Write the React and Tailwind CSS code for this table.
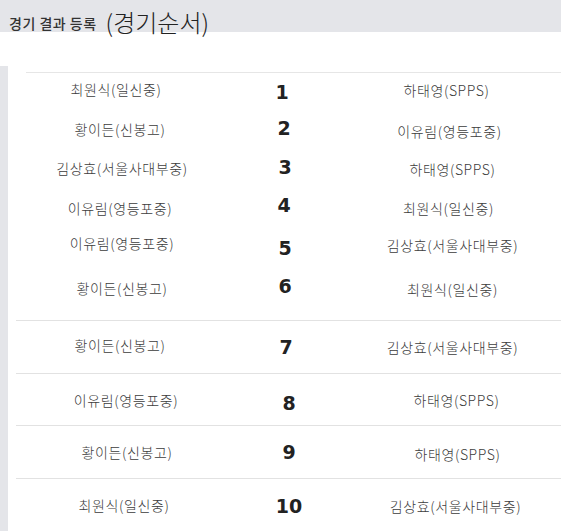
const rows = [
  { l: "최원식(일신중)", n: "1", r: "하태영(SPPS)", h: "h-[36px]", ml: "mt-[6px] -translate-x-[4px]", mn: "mt-[7px] -translate-x-[2px]", mr: "mt-[7px] -translate-x-[6px]" },
  { l: "황이든(신봉고)", n: "2", r: "이유림(영등포중)", h: "h-[39px]", ml: "mt-[10px]", mn: "mt-[7px]", mr: "mt-[12px] -translate-x-[3px]" },
  { l: "김상효(서울사대부중)", n: "3", r: "하태영(SPPS)", h: "h-[39px]", ml: "mt-[10px] translate-x-[2px]", mn: "mt-[7px] translate-x-[1px]", mr: "mt-[11px]" },
  { l: "이유림(영등포중)", n: "4", r: "최원식(일신중)", h: "h-[40px]", ml: "mt-[12px]", mn: "mt-[7px]", mr: "mt-[12px] -translate-x-[4px]" },
  { l: "이유림(영등포중)", n: "5", r: "김상효(서울사대부중)", h: "h-[40px]", ml: "mt-[7px] translate-x-[2px]", mn: "mt-[10px] translate-x-[1px]", mr: "mt-[9px]" },
  { l: "황이든(신봉고)", n: "6", r: "최원식(일신중)", h: "h-[54px]", ml: "mt-[12px] translate-x-[2px]", mn: "mt-[8px] translate-x-[1px]", mr: "mt-[13px]" },
  { l: "황이든(신봉고)", n: "7", r: "김상효(서울사대부중)", h: "h-[53px] border-t", ml: "mt-[14px]", mn: "mt-[14px] translate-x-[2px]", mr: "mt-[16px]" },
  { l: "이유림(영등포중)", n: "8", r: "하태영(SPPS)", h: "h-[53px] border-t", ml: "mt-[16px] translate-x-[6px]", mn: "mt-[17px] translate-x-[5px]", mr: "mt-[16px] translate-x-[4px]" },
  { l: "황이든(신봉고)", n: "9", r: "하태영(SPPS)", h: "h-[53px] border-t", ml: "mt-[16px] translate-x-[7px]", mn: "mt-[14px] translate-x-[5px]", mr: "mt-[18px] translate-x-[5px]" },
  { l: "최원식(일신중)", n: "10", r: "김상효(서울사대부중)", h: "h-[53px] border-t", ml: "mt-[16px] translate-x-[4px]", mn: "mt-[15px] translate-x-[5px]", mr: "mt-[17px] translate-x-[3px]" },
];

export default function App() {
  return (
    <div
      className="w-[561px] h-[531px] overflow-hidden bg-white text-[#333]"
      style={{ fontFamily: '"Noto Sans CJK KR", "Noto Sans", sans-serif' }}
    >
      {/* header */}
      <div className="h-8 bg-[#e4e5e9]">
        <div className="flex items-center pl-[9px] pt-[8px]">
          <span className="text-[14px] leading-[20px] font-medium tracking-[0.5px] text-[#333] translate-y-[1px]">
            경기 결과 등록
          </span>
          <span className="ml-[9px] text-[24px] leading-[28px] font-light text-[#222]">(경기순서)</span>
        </div>
      </div>

      {/* body */}
      <div className="flex mt-[34px] h-[465px]">
        <div className="w-2 bg-[#e4e5e9]" />
        <div className="flex-1 pl-2 flex flex-col">
          <div className="h-[6px] bg-white" />
          <div className="ml-[10px] border-t border-[#e6e6e6]" />
          {rows.map((row, i) => (
            <div
              key={i}
              className={`grid grid-cols-[208px_120px_1fr] border-[#e2e2e2] ${row.h}`}
            >
              <div className={`text-center text-[14px] leading-5 tracking-[0.6px] font-light text-[#3c3c3c] ${row.ml}`}>
                {row.l}
              </div>
              <div
                className={`text-center text-[19px] leading-6 font-bold text-[#222] ${row.mn}`}
                style={{ fontFamily: '"DejaVu Sans", Verdana, sans-serif' }}
              >
                {row.n}
              </div>
              <div className={`text-center text-[14px] leading-5 tracking-[0.6px] font-light text-[#3c3c3c] ${row.mr}`}>
                {row.r}
              </div>
            </div>
          ))}
        </div>
      </div>
    </div>
  );
}
